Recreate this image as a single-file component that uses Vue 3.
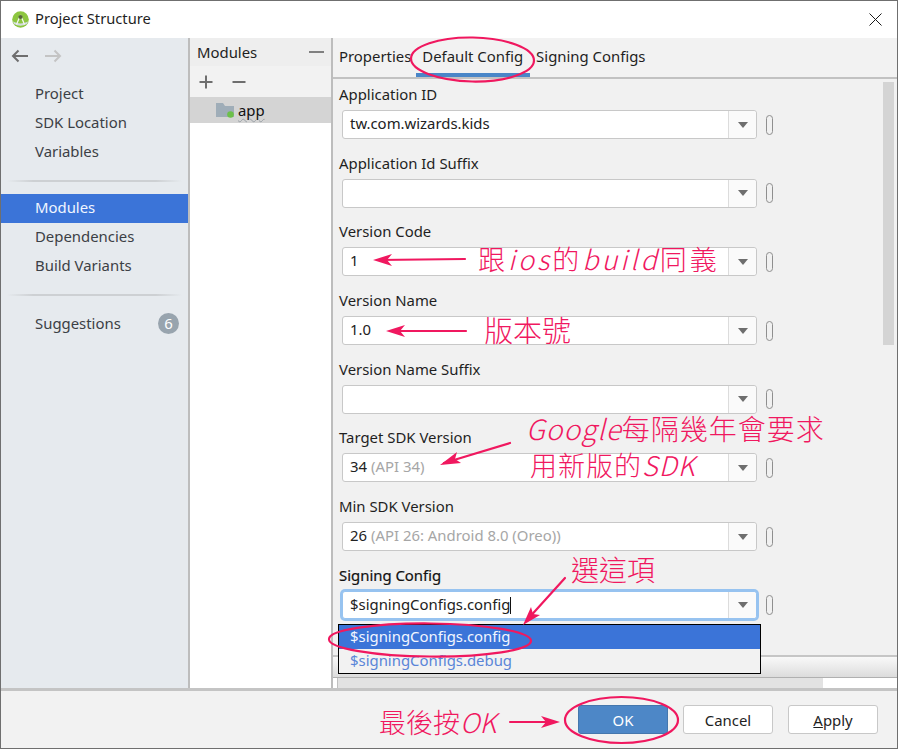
<script setup>
const nav1 = ['Project', 'SDK Location', 'Variables']
const nav2 = [
  { t: 'Modules', on: true },
  { t: 'Dependencies' },
  { t: 'Build Variants' }
]
const fields = [
  { label: 'Application ID', value: 'tw.com.wizards.kids' },
  { label: 'Application Id Suffix' },
  { label: 'Version Code', value: '1' },
  { label: 'Version Name', value: '1.0' },
  { label: 'Version Name Suffix' },
  { label: 'Target SDK Version', value: '34', hint: '(API 34)' },
  { label: 'Min SDK Version', value: '26', hint: '(API 26: Android 8.0 (Oreo))' },
  { label: 'Signing Config', value: '$signingConfigs.config', focus: true }
]
</script>

<template>
  <div class="win">
    <header class="title">
      <svg class="logo" width="17" height="17" viewBox="0 0 17 17">
        <circle cx="8.5" cy="8.5" r="8.300" fill="#8dc63f" />
        <path d="M1 10.500 Q8.500 14.500 16 10.500 L15 13 Q8.500 16.500 2 13Z" fill="#d5dcdf" />
        <path d="M8.500 4 L4.500 13.500 M8.500 4 L12.500 13.500" stroke="#f4f6f2" stroke-width="1.300" fill="none" />
        <circle cx="8.500" cy="6" r="2.100" fill="#56663a" />
      </svg>
      <span class="title-text">Project Structure</span>
      <svg class="close" width="13" height="13" viewBox="0 0 13 13">
        <path d="M0.500 0.500 L12.500 12.500 M12.500 0.500 L0.500 12.500" stroke="#1a1a1a" stroke-width="1" />
      </svg>
    </header>

    <div class="body">
      <aside class="side">
        <div class="arrows">
          <svg width="18" height="14" viewBox="0 0 18 14">
            <path d="M17 7 H2 M7.500 1.500 L2 7 L7.500 12.500" stroke="#6e6e6e" stroke-width="2" fill="none" />
          </svg>
          <svg width="18" height="14" viewBox="0 0 18 14">
            <path d="M1 7 H16 M10.500 1.500 L16 7 L10.500 12.500" stroke="#c4c4c4" stroke-width="2" fill="none" />
          </svg>
        </div>
        <div class="group first">
          <div v-for="n in nav1" :key="n" class="nav">{{ n }}</div>
        </div>
        <div class="rule r1"></div>
        <div class="group">
          <div v-for="n in nav2" :key="n.t" class="nav" :class="{ on: n.on }">{{ n.t }}</div>
        </div>
        <div class="rule r2"></div>
        <div class="group">
          <div class="nav">Suggestions<span class="badge">6</span></div>
        </div>
      </aside>

      <section class="mods">
        <div class="mods-head"><span>Modules</span><i class="dash"></i></div>
        <div class="mods-tools">
          <svg width="14" height="14" viewBox="0 0 14 14">
            <path d="M7 0.500 V13.500 M0.500 7 H13.500" stroke="#6e6e6e" stroke-width="2" />
          </svg>
          <svg width="14" height="14" viewBox="0 0 14 14">
            <path d="M0.500 7 H13.500" stroke="#6e6e6e" stroke-width="2" />
          </svg>
        </div>
        <div class="mod-row">
          <span class="folder">
            <svg width="19" height="16" viewBox="0 0 19 16">
              <path d="M0 1 H7 L9 4 H18 V15 H0Z" fill="#9fadb8" />
              <circle cx="14.500" cy="12.500" r="3.300" fill="#6cc04a" />
            </svg>
          </span>
          <span class="app">app</span>
        </div>
      </section>

      <section class="main">
        <nav class="tabs">
          <span class="tab first-tab">Properties</span>
          <span class="tab active">Default Config</span>
          <span class="tab">Signing Configs</span>
        </nav>
        <div class="content">
          <div class="form">
            <div v-for="f in fields" :key="f.label" class="row">
              <div class="label" :class="{ strong: f.focus }">{{ f.label }}</div>
              <div class="line">
                <div class="combo" :class="{ focus: f.focus }">
                  <div class="val">
                    <span>{{ f.value }}</span>
                    <span v-if="f.focus" class="caret"></span>
                    <span v-if="f.hint" class="hint">{{ f.hint }}</span>
                  </div>
                  <div class="drop"><i class="tri"></i></div>
                </div>
                <i class="pill"></i>
              </div>
            </div>
          </div>
          <div class="vthumb"></div>
          <div class="lower">
            <div class="band"></div>
            <div class="hscroll"><div class="hthumb"></div></div>
          </div>
          <div class="popup">
            <div class="opt sel">$signingConfigs.config</div>
            <div class="opt">$signingConfigs.debug</div>
          </div>
        </div>
      </section>
    </div>

    <footer class="foot">
      <button class="btn ok">OK</button>
      <button class="btn">Cancel</button>
      <button class="btn"><u>A</u>pply</button>
    </footer>

    <!-- hand-drawn annotations layered over the screenshot -->
    <svg class="ink" width="898" height="749" viewBox="0 0 898 749" fill="none">
      <g stroke="#f0185f" stroke-width="2.200" stroke-linecap="round">
        <ellipse cx="472.500" cy="59.500" rx="61.500" ry="22" transform="rotate(1 472 60)" />
        <ellipse cx="430" cy="640" rx="101" ry="16.500" transform="rotate(0.500 430 640)" />
        <ellipse cx="621.500" cy="720" rx="56.500" ry="23" />
        <path d="M465 259 L378 260" />
        <path d="M466 331 L391 331" />
        <path d="M510 722 L552 722" />
        <path d="M510 443 L444 463" />
        <path d="M565 578 L527 620" />
      </g>
      <g fill="#f0185f">
        <path d="M373 260 L392 254 L387 260 L392 266Z" />
        <path d="M386 331 L405 325 L400 331 L405 337Z" />
        <path d="M560 722 L541 716 L546 722 L541 728Z" />
        <path d="M440 465 L457 452 L455 459 L461 463Z" />
        <path d="M523 625 L531 607 L533 614 L540 615Z" />
      </g>
    </svg>
    <span class="note n1">跟<em>ios</em>的<em>build</em>同義</span>
    <span class="note n2">版本號</span>
    <span class="note n3"><em>Google</em>每隔幾年會要求</span>
    <span class="note n4">用新版的<em>SDK</em></span>
    <span class="note n5">選這項</span>
    <span class="note n6">最後按<em>OK</em></span>
  </div>
</template>

<style>
html, body { margin: 0; background: #fff; }
</style>

<style scoped>
.win {
  position: relative;
  width: 898px;
  height: 749px;
  box-sizing: border-box;
  border: 1px solid #6f6f6f;
  display: flex;
  flex-direction: column;
  font-family: "Noto Sans", "Noto Sans CJK TC", sans-serif;
  font-size: 14.9px;
  color: #1f1f1f;
  background: #fff;
  overflow: hidden;
}
.title {
  height: 37px;
  flex: none;
  box-sizing: border-box;
  display: flex;
  align-items: center;
  padding: 0 15px 1px 11px;
  background: #fff;
}
.logo { margin-right: 6px; }
.title-text { flex: 1; font-size: 14.7px; line-height: 18px; margin-top: -2px; }
.body { flex: 1; display: flex; min-height: 0; }
.side {
  width: 187px;
  flex: none;
  background: #e6eaee;
  color: #3c4045;
  border-right: 2px solid #bdbdbd;
}
.arrows { display: flex; gap: 15px; padding: 11px 0 0 10px; height: 27px; }
.group.first { padding-top: 4px; }
.nav { height: 29px; line-height: 27px; padding-left: 34px; position: relative; }
.nav.on { background: #3b74d8; color: #f0f6ff; }
.rule {
  height: 2px;
  margin-left: 6px;
  margin-right: 6px;
  background: linear-gradient(90deg, #e6eaee, #cdd0d3 15%, #cdd0d3 85%, #e6eaee);
}
.r1 { margin-top: 13px; margin-bottom: 12px; }
.r2 { margin-top: 13px; margin-bottom: 14px; }
.badge {
  position: absolute;
  left: 157px;
  top: 3px;
  width: 21px;
  height: 21px;
  border-radius: 50%;
  background: #98a4ae;
  color: #fff;
  text-align: center;
  line-height: 21px;
}
.mods {
  width: 141px;
  flex: none;
  background: #fff;
  border-right: 2px solid #bdbdbd;
}
.mods-head {
  height: 28px;
  background: #eeeeee;
  display: flex;
  align-items: center;
  justify-content: space-between;
  padding: 0 7px;
}
.dash { width: 15px; height: 2px; background: #808080; }
.mods-tools {
  height: 31px;
  background: #f2f2f2;
  display: flex;
  align-items: center;
  gap: 19px;
  padding-left: 9px;
}
.mod-row {
  height: 26px;
  background: #d4d4d4;
  display: flex;
  align-items: center;
  padding-left: 26px;
  gap: 3px;
  color: #111;
}
.folder { display: flex; }
.app {
  text-decoration: underline wavy #9aa0a6 1px;
  text-underline-offset: 2px;
}
.main { flex: 1; min-width: 0; display: flex; flex-direction: column; background: #f1f1f1; }
.tabs {
  height: 41px;
  flex: none;
  box-sizing: border-box;
  display: flex;
  border-bottom: 2px solid #c2c2c2;
  background: #f2f2f2;
}
.tab { position: relative; height: 39px; line-height: 36px; padding: 0 6px; }
.first-tab { padding-right: 5px; }
.tab.active { padding-right: 7px; }
.tab.active::after {
  content: "";
  position: absolute;
  left: 0;
  right: 0;
  bottom: 0;
  height: 4px;
  background: #4a86c8;
}
.content { flex: 1; position: relative; min-height: 0; }
.form { padding: 4px 0 0 6px; }
.row { height: 68.7px; }
.label { height: 27px; line-height: 23px; }
.label.strong { color: #111; -webkit-text-stroke: 0.2px #111; }
.line { display: flex; align-items: center; }
.combo {
  box-sizing: border-box;
  margin-left: 3px;
  width: 415px;
  height: 29px;
  border: 1px solid #c8c8c8;
  border-radius: 3px;
  display: flex;
  background: #fff;
}
.combo.focus { box-shadow: 0 0 0 2px #97c3f0; border-color: #97c3f0; height: 28px; }
.val { flex: 1; padding-left: 7px; line-height: 25px; white-space: nowrap; color: #222; }
.hint { color: #a6a6a6; margin-left: 4px; }
.caret { display: inline-block; width: 1px; height: 17px; background: #111; vertical-align: -4px; }
.drop {
  width: 27px;
  border-left: 1px solid #dcdcdc;
  background: #fafafa;
  border-radius: 0 3px 3px 0;
  display: flex;
  align-items: center;
  justify-content: center;
}
.tri { width: 0; height: 0; border: 5px solid transparent; border-top: 6px solid #6e6e6e; border-bottom: 0; }
.pill {
  margin-left: 9px;
  width: 7px;
  height: 20px;
  box-sizing: border-box;
  border: 1px solid #8f8f8f;
  border-radius: 4px;
}
.vthumb { position: absolute; top: 3px; right: 3px; width: 11px; height: 263px; background: #d4d4d4; }
.lower {
  position: absolute;
  left: 0;
  right: 0;
  top: 576px;
  bottom: 0;
  display: flex;
  flex-direction: column;
  border-top: 2px solid #c6c6c6;
}
.band {
  height: 20px;
  flex: none;
  border-bottom: 1px solid #b0b0b0;
  background: linear-gradient(#f9f9f9, #dcdcdc);
}
.hscroll {
  flex: 1;
  background: #fff;
}
.hthumb {
  margin-left: 4px;
  width: 486px;
  height: 100%;
  box-sizing: border-box;
  border-left: 1px solid #c0c0c0;
  background: #e2e2e2;
}
.popup {
  position: absolute;
  left: 5px;
  top: 545px;
  width: 423px;
  box-sizing: border-box;
  border: 1px solid #000;
  background: #f2f2f2;
}
.opt { height: 24px; line-height: 23px; padding-left: 11px; color: #5a85d8; }
.opt.sel { background: #3b74d8; color: #f2f6ff; }
.foot {
  height: 60px;
  flex: none;
  box-sizing: border-box;
  border-top: 3px solid #c4c4c4;
  background: #f2f2f2;
  display: flex;
  align-items: center;
  justify-content: flex-end;
  gap: 15px;
  padding: 0 19px 0 0;
}
.btn {
  width: 90px;
  height: 29px;
  box-sizing: border-box;
  border: 1px solid #c8c8c8;
  border-radius: 3px;
  background: #fff;
  font: inherit;
  color: #1f1f1f;
  padding: 0;
}
.btn.ok { background: #4d87c7; border-color: #4577ad; color: #fff; }
.ink { position: absolute; left: -1px; top: -1px; pointer-events: none; }
.note {
  position: absolute;
  margin: -1px 0 0 -1px;
  color: #f0185f;
  font-family: "Noto Sans CJK TC", sans-serif;
  font-weight: 300;
  white-space: nowrap;
  line-height: 1.2;
}
.note em { font-style: italic; }
.n1 { left: 478px; top: 243px; font-size: 27px; letter-spacing: 3px; }
.n2 { left: 484px; top: 312px; font-size: 29px; }
.n3 { left: 526px; top: 412px; font-size: 28px; letter-spacing: 1px; }
.n4 { left: 530px; top: 449px; font-size: 27px; letter-spacing: 1px; }
.n5 { left: 571px; top: 553px; font-size: 28px; }
.n6 { left: 379px; top: 706px; font-size: 27px; }
</style>
